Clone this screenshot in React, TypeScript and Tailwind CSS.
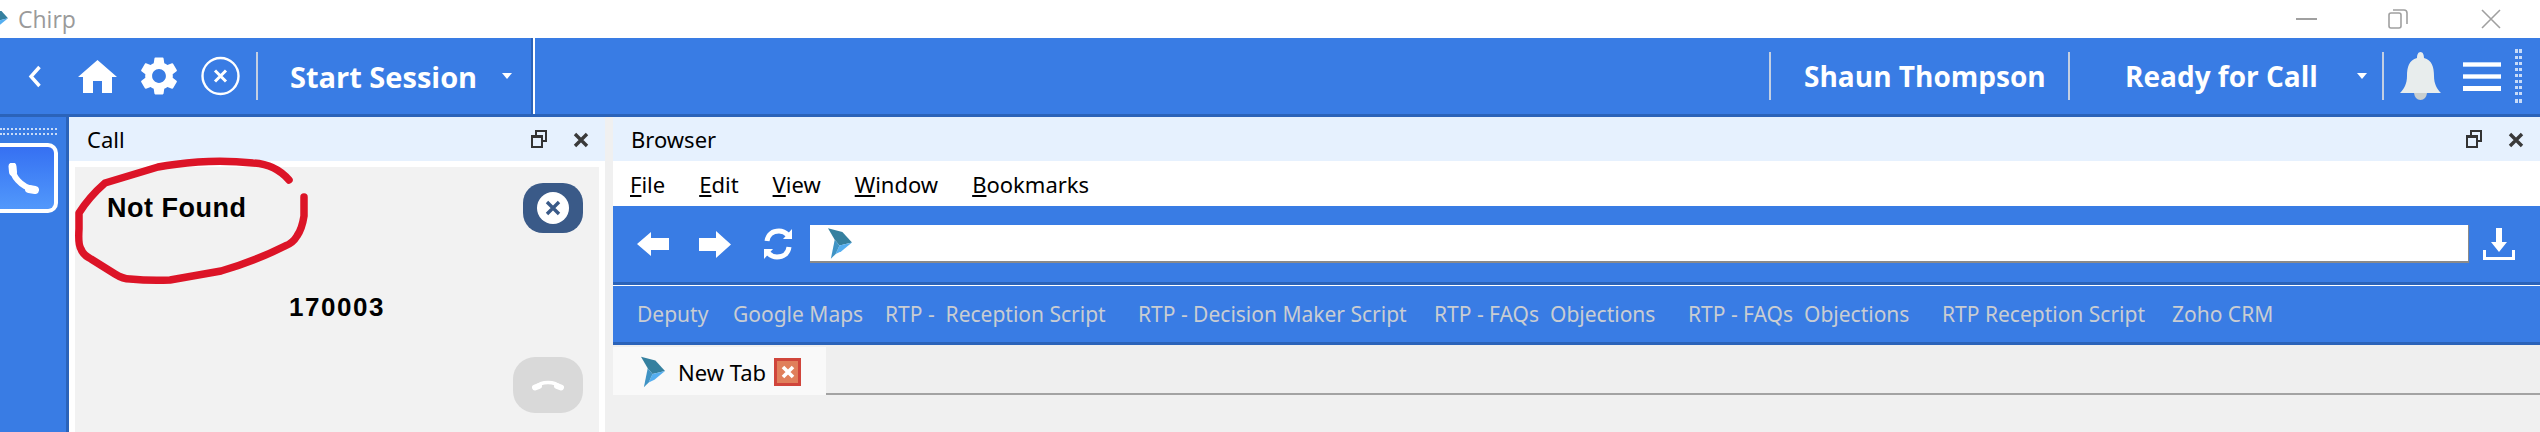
import { MdSettings } from "react-icons/md";

const bookmarks = [
  { label: "Deputy", width: "w-[96px]" },
  { label: "Google Maps", width: "w-[152px]" },
  { label: "RTP -  Reception Script", width: "w-[253px]" },
  { label: "RTP - Decision Maker Script", width: "w-[296px]" },
  { label: "RTP - FAQs  Objections", width: "w-[254px]" },
  { label: "RTP - FAQs  Objections", width: "w-[254px]" },
  { label: "RTP Reception Script", width: "w-[230px]" },
  { label: "Zoho CRM", width: "w-[100px]" },
];

const menus = [
  { first: "F", rest: "ile" },
  { first: "E", rest: "dit" },
  { first: "V", rest: "iew" },
  { first: "W", rest: "indow" },
  { first: "B", rest: "ookmarks" },
];

function ChirpLogo({ className }: { className: string }) {
  return (
    <svg viewBox="0 0 25 32" className={className}>
      <path d="M0 0 L15 4 L25 15 L12 18 L7 12 Z" fill="#35809f" />
      <path d="M12 18 L25 15 L14 24 L8 27 Z" fill="#55aef0" />
      <path d="M7 12 L12 18 L8 27 L3 32 Z" fill="#3f93c4" />
    </svg>
  );
}

function PanelButtons() {
  return (
    <div className="flex items-center">
      <svg viewBox="0 0 16 18" className="w-[16px] h-[18px]">
        <path d="M5 5 V1 H15 V11 H11" fill="none" stroke="#333" strokeWidth="2" />
        <rect x="1" y="6" width="10" height="11" fill="none" stroke="#333" strokeWidth="2" />
        <rect x="1" y="5" width="10" height="3" fill="#333" />
      </svg>
      <svg viewBox="0 0 16 16" className="w-[16px] h-[16px] ml-[26px] mt-[2px]">
        <path d="M2 2 L14 14 M14 2 L2 14" stroke="#3a3a3a" strokeWidth="3.4" />
      </svg>
    </div>
  );
}

function Divider({ className }: { className: string }) {
  return <div className={`w-[2px] h-[48px] bg-[#c3cfe2] ${className}`} />;
}

function Caret({ className }: { className: string }) {
  return (
    <svg viewBox="0 0 10 6" className={`w-[10px] h-[6px] ${className}`}>
      <path d="M0 0 H10 L5 6 Z" fill="#fff" />
    </svg>
  );
}

export default function App() {
  return (
    <div className="w-[2540px] h-[432px] overflow-hidden flex flex-col bg-white font-['Noto_Sans',sans-serif]">
      {/* Title bar */}
      <div className="h-[38px] flex items-center bg-white">
        <ChirpLogo className="w-[18px] h-[24px] -ml-[10px] shrink-0" />
        <span className="ml-[10px] text-[23px] leading-none text-[#9a9a9a] font-['Open_Sans',sans-serif]">Chirp</span>
        <svg viewBox="0 0 21 2" className="w-[21px] h-[2px] ml-auto">
          <rect width="21" height="2" fill="#a0a0a0" />
        </svg>
        <svg viewBox="0 0 20 20" className="w-[20px] h-[20px] ml-[71px]">
          <rect x="1" y="4" width="12" height="15" rx="2" fill="none" stroke="#a0a0a0" strokeWidth="1.6" />
          <path d="M5 1 H16 Q19 1 19 4 V15" fill="none" stroke="#a0a0a0" strokeWidth="1.6" />
        </svg>
        <svg viewBox="0 0 20 20" className="w-[20px] h-[20px] ml-[73px] mr-[39px]">
          <path d="M1 1 L19 19 M19 1 L1 19" stroke="#a0a0a0" strokeWidth="1.6" />
        </svg>
      </div>

      {/* Main toolbar */}
      <div className="h-[79px] shrink-0 flex items-center bg-[#397ce4] border-b-[3px] border-[#2b63b9] pr-[18px]">
        <svg viewBox="0 0 14 23" className="w-[14px] h-[23px] ml-[28px]">
          <path d="M11.5 2 L3 11.5 L11.5 21" fill="none" stroke="#fff" strokeWidth="3.4" />
        </svg>
        <svg viewBox="0 0 39 33" className="w-[39px] h-[33px] ml-[36px]">
          <path d="M19.5 0 L39 17 H34 V33 H24 V21 H15 V33 H5 V17 H0 Z" fill="#fff" />
        </svg>
        <MdSettings className="w-[46px] h-[46px] ml-[19px] text-white" />
        <svg viewBox="0 0 39 40" className="w-[39px] h-[40px] ml-[19px]">
          <circle cx="19.5" cy="20" r="18" fill="none" stroke="#fff" strokeWidth="2.4" />
          <path d="M14 14.5 L25 25.5 M25 14.5 L14 25.5" stroke="#fff" strokeWidth="3" />
        </svg>
        <Divider className="ml-[16px]" />
        <span className="ml-[32px] w-[183px] text-[29px] leading-none font-bold text-white whitespace-nowrap font-['Open_Sans',sans-serif]">
          Start Session
        </span>
        <Caret className="ml-[29px]" />
        <div className="ml-[19px] self-stretch flex">
          <div className="w-[2px] bg-[#2b63b9]" />
          <div className="w-[2px] bg-white" />
        </div>

        <Divider className="ml-auto" />
        <span className="ml-[33px] w-[241px] text-[28px] leading-none font-bold text-white whitespace-nowrap font-['Open_Sans',sans-serif]">
          Shaun Thompson
        </span>
        <Divider className="ml-[23px]" />
        <span className="ml-[55px] w-[195px] text-[28px] leading-none font-bold text-white whitespace-nowrap font-['Open_Sans',sans-serif]">
          Ready for Call
        </span>
        <Caret className="ml-[37px]" />
        <Divider className="ml-[15px]" />
        <svg viewBox="0 0 41 48" className="w-[41px] h-[48px] ml-[16px]">
          <path d="M20.5 0 C23 0 24 3 24 6 C32 8 34 15 34 24 C34 32 37 37 41 41 H0 C4 37 7 32 7 24 C7 15 9 8 17 6 C17 3 18 0 20.5 0 Z" fill="#e8eded" />
          <path d="M14 41 H27 Q26 48 20.5 48 Q15 48 14 41 Z" fill="#c9cfcf" />
        </svg>
        <div className="ml-[22px] w-[38px] flex flex-col gap-[7px]">
          <div className="h-[5px] bg-white border-y border-[#bcd6fa]" />
          <div className="h-[5px] bg-white border-y border-[#bcd6fa]" />
          <div className="h-[5px] bg-white" />
        </div>
        <div className="ml-[14px] h-[54px] w-[7px] flex gap-[1px]">
          <div className="border-l-[3px] border-dotted border-[#c8dbf8]" />
          <div className="border-l-[3px] border-dotted border-[#c8dbf8]" />
        </div>
      </div>

      <div className="flex-1 flex min-h-0">
        {/* Left rail */}
        <div className="w-[69px] shrink-0 bg-[#397ce4] border-r-[3px] border-[#2b63b9] pt-[11px]">
          <div className="h-[7px] w-[57px] border-y-2 border-dotted border-[#c8dbf8]" />
          <div className="mt-[8px] w-[58px] h-[70px] flex items-center border-4 border-l-0 border-white rounded-r-[10px] bg-gradient-to-b from-[#3670f2] to-[#5298fb]">
            <svg viewBox="0 0 31 31" className="w-[31px] h-[31px] ml-[8px]">
              <path d="M4.5 4.5 C4 12 12 24 26.5 26.5" fill="none" stroke="#fff" strokeWidth="6" strokeLinecap="round" />
              <path d="M4.5 3.5 L5 9 M21 26 L27 27" stroke="#fff" strokeWidth="8" strokeLinecap="round" />
            </svg>
          </div>
        </div>

        {/* Call panel */}
        <div className="w-[536px] shrink-0 flex flex-col bg-white">
          <div className="h-[44px] shrink-0 flex items-center justify-between bg-[#e6f1fe] pl-[18px] pr-[16px]">
            <span className="text-[22px] leading-none text-black">Call</span>
            <PanelButtons />
          </div>
          <div className="relative flex-1 mx-[6px] mt-[6px] bg-[#f2f2f2]">
            <div className="flex justify-between pt-[16px] pr-[16px] pl-[32px]">
              <span className="mt-[13px] text-[27px] leading-[24px] font-bold tracking-[0.5px] text-black font-['Liberation_Sans',sans-serif]">
                Not Found
              </span>
              <div className="w-[60px] h-[50px] flex items-center justify-center rounded-[20px] bg-[#3a5a88]">
                <div className="w-[32px] h-[32px] flex items-center justify-center rounded-full bg-white">
                  <svg viewBox="0 0 16 16" className="w-[16px] h-[16px]">
                    <path d="M2 2 L14 14 M14 2 L2 14" stroke="#3a5a88" strokeWidth="3.4" />
                  </svg>
                </div>
              </div>
            </div>
            <div className="mt-[62px] h-[24px] text-center text-[26px] leading-[24px] font-bold tracking-[1.5px] text-black font-['Liberation_Sans',sans-serif]">
              170003
            </div>
            <div className="mt-[38px] flex justify-end pr-[16px]">
              <div className="w-[70px] h-[56px] flex items-center justify-center rounded-[22px] bg-[#d9d9d9]">
                <svg viewBox="0 0 32 12" className="w-[32px] h-[12px]">
                  <path d="M4 8 C9 2 23 2 28 8" fill="none" stroke="#fff" strokeWidth="3.5" />
                  <path d="M3 8.5 L7 7 M25 7 L29 8.5" stroke="#fff" strokeWidth="6" strokeLinecap="round" />
                </svg>
              </div>
            </div>
            {/* hand drawn annotation */}
            <svg viewBox="0 0 240 125" className="absolute left-0 top-0 w-[240px] h-[125px] overflow-visible">
              <path
                d="M214 13 Q200 -3 178 -4 Q150 -7 123 -5 Q100 -3 83 0 L30 16 Q14 30 4 46 L4 62 Q3 78 6 82 Q8 88 16 92 L40 107 Q48 112 55 112 Q75 114 95 113 L146 104 Q180 94 210 79 Q218 76 222 69 Q227 62 229 49 L229 30"
                fill="none"
                stroke="#dc1427"
                strokeWidth="7.5"
                strokeLinecap="round"
                strokeLinejoin="round"
              />
            </svg>
          </div>
        </div>

        <div className="w-[8px] shrink-0 bg-[#f0f0f0]" />

        {/* Browser panel */}
        <div className="flex-1 min-w-0 flex flex-col bg-[#f0f0f0]">
          <div className="h-[44px] shrink-0 flex items-center justify-between bg-[#e6f1fe] pl-[18px] pr-[16px]">
            <span className="text-[22px] leading-none text-black">Browser</span>
            <PanelButtons />
          </div>
          <div className="h-[45px] shrink-0 flex items-center gap-[34px] bg-white pl-[17px]">
            {menus.map((item) => (
              <span key={item.first + item.rest} className="text-[22px] leading-none text-black">
                <span className="underline">{item.first}</span>
                {item.rest}
              </span>
            ))}
          </div>
          <div className="h-[79px] shrink-0 flex items-center bg-[#397ce4] border-b-[3px] border-[#2b63b9] pl-[24px]">
            <svg viewBox="0 0 32 24" className="w-[32px] h-[24px]">
              <path d="M0 12 L14 0 V6 H32 V18 H14 V24 Z" fill="#fff" />
            </svg>
            <svg viewBox="0 0 32 27" className="w-[32px] h-[27px] ml-[30px]">
              <path d="M32 13.5 L17 0 V7 H0 V20 H17 V27 Z" fill="#fff" />
            </svg>
            <svg viewBox="0 0 28 32" className="w-[28px] h-[32px] ml-[33px]">
              <path d="M3 13 C4 6 9 3 15 3 C19 3 22 5 24 7" fill="none" stroke="#fff" strokeWidth="5" />
              <path d="M19 11 L28 11 L28 1 Z" fill="#fff" />
              <path d="M25 19 C24 26 19 29 13 29 C9 29 6 27 4 25" fill="none" stroke="#fff" strokeWidth="5" />
              <path d="M9 21 L0 21 L0 31 Z" fill="#fff" />
            </svg>
            <div className="ml-[18px] w-[1659px] h-[38px] flex items-center bg-white border-b-2 border-r border-[#8a8a8a] pl-[18px]">
              <ChirpLogo className="w-[24px] h-[31px]" />
            </div>
            <svg viewBox="0 0 32 32" className="w-[32px] h-[32px] ml-[14px]">
              <path d="M13 0 H19 V14 H24 L16 24 L8 14 H13 Z" fill="#fff" />
              <path d="M1.5 22 V30.5 H30.5 V22" fill="none" stroke="#fff" strokeWidth="3" />
            </svg>
          </div>
          <div className="h-[1px] shrink-0 bg-white" />
          <div className="h-[59px] shrink-0 flex items-center bg-[#397ce4] border-b-[3px] border-[#2b63b9] pl-[24px]">
            {bookmarks.map((item, i) => (
              <span key={i} className={`${item.width} text-[21px] leading-none text-[#c9cdd2] whitespace-pre`}>
                {item.label}
              </span>
            ))}
          </div>
          <div className="h-[50px] shrink-0 flex bg-[#efefef] border-b-2 border-[#a3a3a3]">
            <div className="mt-[2px] -mb-[2px] w-[213px] h-[50px] flex items-center bg-[#f9f9f9] pl-[28px]">
              <ChirpLogo className="w-[24px] h-[32px]" />
              <span className="ml-[13px] text-[22px] leading-none text-black whitespace-nowrap">New Tab</span>
              <div className="ml-[8px] w-[27px] h-[28px] shrink-0 flex items-center justify-center bg-[#e07f5b] border-[3px] border-[#d0453b]">
                <svg viewBox="0 0 14 14" className="w-[14px] h-[14px]">
                  <path d="M2 2 L12 12 M12 2 L2 12" stroke="#fff" strokeWidth="3.6" />
                </svg>
              </div>
            </div>
          </div>
          <div className="flex-1 bg-[#f0f0f0]" />
        </div>
      </div>
    </div>
  );
}
